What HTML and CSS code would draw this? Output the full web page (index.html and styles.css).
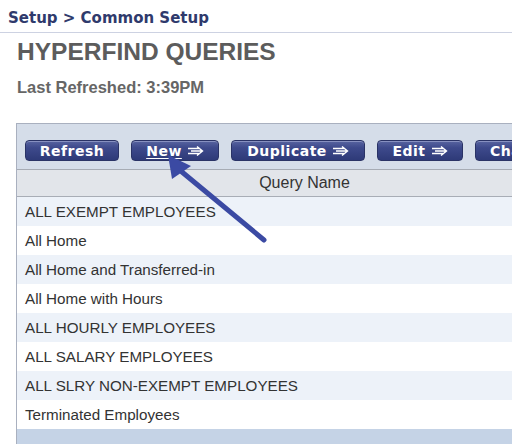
FILE: index.html
```html
<!DOCTYPE html>
<html>
<head>
<meta charset="utf-8">
<link rel="stylesheet" href="styles.css">
</head>
<body>
<div class="page">
  <div class="crumb">Setup &gt; Common Setup</div>
  <h1 class="title">HYPERFIND QUERIES</h1>
  <div class="refreshed">Last Refreshed: 3:39PM</div>
  <div class="panel">
    <div class="toolbar">
      <span class="btn btn-refresh">Refresh</span>
      <span class="btn btn-new"><u>New</u> <svg class="arr" viewBox="0 0 16 10" width="16" height="10"><path d="M0 2.5H11M0 7.5H11M3 5H14M9 0.5L14.5 5L9 9.5" fill="none" stroke="#fff" stroke-width="1.4"/></svg></span>
      <span class="btn btn-dup">Duplicate <svg class="arr" viewBox="0 0 16 10" width="16" height="10"><path d="M0 2.5H11M0 7.5H11M3 5H14M9 0.5L14.5 5L9 9.5" fill="none" stroke="#fff" stroke-width="1.4"/></svg></span>
      <span class="btn btn-edit">Edit <svg class="arr" viewBox="0 0 16 10" width="16" height="10"><path d="M0 2.5H11M0 7.5H11M3 5H14M9 0.5L14.5 5L9 9.5" fill="none" stroke="#fff" stroke-width="1.4"/></svg></span>
      <span class="btn btn-change">Change</span>
    </div>
    <div class="thead">Query Name</div>
    <div class="row alt">ALL EXEMPT EMPLOYEES</div>
    <div class="row">All Home</div>
    <div class="row alt">All Home and Transferred-in</div>
    <div class="row">All Home with Hours</div>
    <div class="row alt">ALL HOURLY EMPLOYEES</div>
    <div class="row">ALL SALARY EMPLOYEES</div>
    <div class="row alt">ALL SLRY NON-EXEMPT EMPLOYEES</div>
    <div class="row">Terminated Employees</div>
    <div class="tfoot"></div>
  </div>
  <svg class="pointer" width="512" height="444" viewBox="0 0 512 444">
    <line x1="264" y1="240" x2="182" y2="172" stroke="#3b4aa3" stroke-width="5" stroke-linecap="round"/>
    <polygon points="168,155 191,166 172,179" fill="#3b4aa3"/>
  </svg>
</div>
</body>
</html>
```
FILE: styles.css
```css
html, body {
  margin: 0;
  padding: 0;
  background: #fff;
  overflow: hidden;
}
.page {
  position: relative;
  width: 512px;
  height: 444px;
  overflow: hidden;
}
.crumb {
  font-family: "DejaVu Sans", Verdana, sans-serif;
  font-weight: bold;
  font-size: 15px;
  color: #2f3a6c;
  padding-left: 8px;
  height: 33px;
  line-height: 36px;
  box-sizing: border-box;
  border-bottom: 1px solid #cdd2e2;
}
.title {
  margin: 0 0 0 17px;
  font-family: "Liberation Sans", Arial, sans-serif;
  font-weight: bold;
  font-size: 24.5px;
  color: #5c5c5c;
  line-height: 38px;
}
.refreshed {
  margin-left: 17px;
  font-family: "Liberation Sans", Arial, sans-serif;
  font-weight: bold;
  font-size: 16.5px;
  color: #666;
  line-height: 32px;
}
.panel {
  margin: 20px 0 0 16px;
  width: 575px;
  border-top: 1px solid #a9b0bf;
  border-left: 1px solid #a9b0bf;
  font-family: "Liberation Sans", Arial, sans-serif;
}
.toolbar {
  display: flex;
  gap: 12px;
  height: 46px;
  box-sizing: border-box;
  padding: 16px 0 0 8px;
  background: #d5dde9;
  border-bottom: 1px solid #a6abb4;
  white-space: nowrap;
}
.btn {
  display: inline-flex;
  align-items: center;
  justify-content: center;
  gap: 6px;
  height: 21px;
  box-sizing: border-box;
  padding: 0 14px;
  border-radius: 4px;
  background: linear-gradient(#5864a0 0%, #3e4a8c 35%, #2e3a78 100%);
  border: 1px solid #2a3366;
  box-shadow: inset 0 1px 0 #8790c0;
  color: #fff;
  font-family: "DejaVu Sans", Verdana, sans-serif;
  font-weight: bold;
  font-size: 14px;
  letter-spacing: 0.5px;
  flex: none;
}
.btn u { text-decoration-thickness: 1px; text-underline-offset: 2px; }
.btn-refresh { width: 94px; }
.btn-new { width: 88px; }
.btn-dup { width: 134px; }
.btn-edit { width: 86px; }
.btn-change { width: 100px; justify-content: flex-start; }
.arr { flex: none; }
.thead {
  height: 27px;
  box-sizing: border-box;
  line-height: 26px;
  text-align: center;
  background: #e2e5ea;
  border-bottom: 1px solid #a8adb6;
  color: #333;
  font-size: 16px;
}
.row {
  height: 29px;
  line-height: 29px;
  padding-left: 8px;
  font-size: 15.2px;
  color: #333;
  background: #fff;
  white-space: nowrap;
}
.row.alt { background: #edf2f9; }
.tfoot {
  height: 30px;
  background: #c5d3e6;
}
.pointer {
  position: absolute;
  left: 0;
  top: 0;
  pointer-events: none;
}
```
